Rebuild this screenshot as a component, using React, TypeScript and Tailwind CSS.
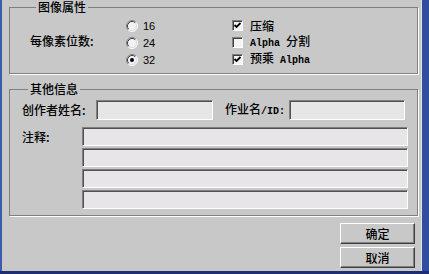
import React from 'react';

const cjk = "font-['Noto_Sans_CJK_SC',sans-serif] font-medium";
const mono = "font-['Liberation_Mono',monospace]";
const sans = "font-['Liberation_Sans',sans-serif]";

// Sunken radio button, classic style
function Radio({ checked }: { checked?: boolean }) {
  return (
    <svg width="12" height="12" viewBox="0 0 12 12" className="shrink-0">
      <circle cx="6" cy="6" r="5" fill="#f2f2f2" />
      <path d="M2.11 9.89 A5.5 5.5 0 0 1 9.89 2.11" stroke="#808080" strokeWidth="1" fill="none" />
      <path d="M9.89 2.11 A5.5 5.5 0 0 1 2.11 9.89" stroke="#ffffff" strokeWidth="1" fill="none" />
      <path d="M2.82 9.18 A4.5 4.5 0 0 1 9.18 2.82" stroke="#404040" strokeWidth="1" fill="none" />
      <path d="M9.18 2.82 A4.5 4.5 0 0 1 2.82 9.18" stroke="#dcdcdc" strokeWidth="1" fill="none" />
      {checked && <circle cx="6" cy="6" r="2" fill="#000" />}
    </svg>
  );
}

function Checkbox({ checked }: { checked?: boolean }) {
  return (
    <div className="w-[11px] h-[11px] shrink-0 border-t border-l border-t-[#808080] border-l-[#808080] border-b border-r border-b-white border-r-white bg-[#f4f4f4] shadow-[inset_1px_1px_0_#404040] flex items-center justify-center">
      {checked && (
        <svg width="9" height="9" viewBox="0 0 9 9">
          <polyline points="1.5,4 3.5,6 7.5,2" fill="none" stroke="#000" strokeWidth="1.8" />
        </svg>
      )}
    </div>
  );
}

const sunken =
  'border-t border-l border-t-[#808080] border-l-[#808080] border-b border-r border-b-white border-r-white bg-[#e7e5e7] shadow-[inset_1px_1px_0_#505050]';

function Button({ label }: { label: string }) {
  return (
    <button
      className={`w-[75px] h-[21px] ${cjk} text-[12px] leading-[14px] text-black bg-[#c8c8c8] border-t border-l border-t-white border-l-white border-b border-r border-b-[#404040] border-r-[#404040] shadow-[inset_-1px_-1px_0_#808080] flex items-center justify-center`}
    >
      {label}
    </button>
  );
}

export default function App() {
  return (
    <div className="w-[429px] h-[274px] flex flex-col overflow-hidden text-black">
      <div className="flex h-[271px]">
        <div className="w-[2px] bg-[#3a5cb0]" />
        <div className="w-[419px] bg-[#c8c8c8] pl-[7px] pr-[3px] flex flex-col">
          {/* 图像属性 */}
          <fieldset className="border border-[#808080] shadow-[1px_1px_0_#fff] pt-[3px] pb-[5px] pl-[20px] flex">
            <legend className={`ml-[6px] px-[2px] ${cjk} text-[12px] leading-[14px]`}>图像属性</legend>
            <div className="flex">
              <div className={`w-[96px] pt-[17px] ${cjk} text-[12px] leading-[14px]`}>每像素位数:</div>
              <div className="w-[106px] flex flex-col">
                {['16', '24', '32'].map((v, i) => (
                  <div key={v} className="h-[17px] flex items-center gap-[5px]">
                    <Radio checked={i === 2} />
                    <span className={`${sans} text-[11px] leading-[12px]`}>{v}</span>
                  </div>
                ))}
              </div>
              <div className="flex flex-col">
                <div className="h-[17px] flex items-center gap-[7px]">
                  <Checkbox checked />
                  <span className={`${cjk} text-[12px] leading-[14px]`}>压缩</span>
                </div>
                <div className="h-[17px] flex items-center gap-[7px]">
                  <Checkbox />
                  <span className="text-[12px] leading-[14px] whitespace-pre">
                    <span className={`${mono} text-[10px] font-bold`}>Alpha </span>
                    <span className={cjk}>分割</span>
                  </span>
                </div>
                <div className="h-[17px] flex items-center gap-[7px]">
                  <Checkbox checked />
                  <span className="text-[12px] leading-[14px] whitespace-pre">
                    <span className={cjk}>预乘</span>
                    <span className={`${mono} text-[10px] font-bold`}> Alpha</span>
                  </span>
                </div>
              </div>
            </div>
          </fieldset>

          {/* 其他信息 */}
          <fieldset className="mt-[8px] border border-[#808080] shadow-[1px_1px_0_#fff] pt-[4px] pb-[6px] pl-[12px] pr-[9px] flex flex-col">
            <legend className={`ml-[6px] px-[2px] ${cjk} text-[12px] leading-[14px]`}>其他信息</legend>
            <div className="flex items-center h-[20px]">
              <div className={`w-[74px] ${cjk} text-[12px] leading-[14px]`}>创作者姓名:</div>
              <div className={`w-[117px] h-[20px] ${sunken}`} />
              <div className="w-[64px] ml-[12px] text-[12px] leading-[14px] whitespace-pre">
                <span className={cjk}>作业名</span>
                <span className={`${mono} text-[10px] font-bold`}>/ID:</span>
              </div>
              <div className={`w-[116px] h-[20px] ${sunken}`} />
            </div>
            <div className="flex mt-[7px]">
              <div className={`w-[60px] pt-[3px] ${cjk} text-[12px] leading-[14px]`}>注释:</div>
              <div className="flex-1 flex flex-col gap-[2px]">
                <div className={`h-[19px] ${sunken}`} />
                <div className={`h-[19px] ${sunken}`} />
                <div className={`h-[19px] ${sunken}`} />
                <div className={`h-[19px] ${sunken}`} />
              </div>
            </div>
          </fieldset>

          <div className="self-end mr-[3px] mt-[7px] flex flex-col gap-[3px]">
            <Button label="确定" />
            <Button label="取消" />
          </div>
        </div>
        <div className="w-[8px] border-l border-l-[#dfe3ee] bg-[#2f4e9e]" />
      </div>
      <div className="h-[3px] bg-[#1d2e72]" />
    </div>
  );
}
